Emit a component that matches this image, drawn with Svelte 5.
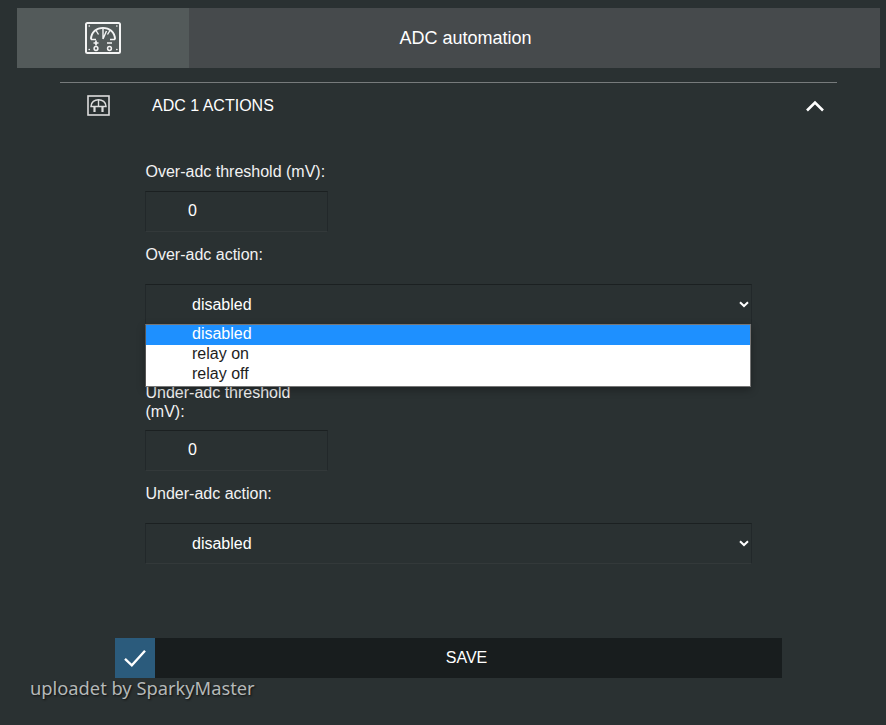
<script lang="ts">
  const menuOptions = ['disabled', 'relay on', 'relay off'];
</script>

{#snippet gaugeLarge()}
  <svg class="gauge-large" viewBox="0 0 36 32" fill="none" stroke="currentColor" aria-hidden="true">
    <rect x="1" y="1" width="34" height="30" rx="1.5" stroke-width="2" />
    <path d="M6 17.5 C6 2 30 2 30 17.5" stroke-width="1.9" />
    <path d="M6 17.5h5M25 17.5h5" stroke-width="1.6" />
    <path d="M18 6v11M11 8.5l2.5 4M25 8.5l-2.5 4M18 17l3.5-8" stroke-width="1.4" />
    <path d="M8.5 21h5M11 18.5v5M22 21h5" stroke-width="1.7" />
    <circle cx="11" cy="26.5" r="1.9" stroke-width="1.5" />
    <circle cx="24.5" cy="26.5" r="1.9" stroke-width="1.5" />
    <path d="M4.2 4h.1M31.8 4h.1M4.2 27.5h.1M31.8 27.5h.1" stroke-width="1.6" stroke-linecap="round" />
  </svg>
{/snippet}

{#snippet gaugeSmall()}
  <svg class="gauge-small" viewBox="0 0 23 21" fill="none" stroke="currentColor" aria-hidden="true">
    <rect x="1" y="1" width="21" height="19" stroke-width="1.6" />
    <path d="M4 11.5 C4 2.5 19 2.5 19 11.5 Z" stroke-width="1.5" />
    <path d="M11.5 4.5v7" stroke-width="1.4" />
    <path d="M7.5 11.5v5.5M15.5 11.5v5.5" stroke-width="2.2" />
  </svg>
{/snippet}

{#snippet chevron()}
  <svg class="select-arrow" viewBox="0 0 10 7" fill="none" stroke="currentColor" stroke-width="2" aria-hidden="true">
    <polyline points="1 1.2 5 5 9 1.2" />
  </svg>
{/snippet}

<div class="page">
  <header class="top-bar">
    <div class="top-icon">{@render gaugeLarge()}</div>
    <h1 class="top-title">ADC automation</h1>
  </header>

  <section class="panel">
    <div class="panel-head">
      <span class="panel-icon">{@render gaugeSmall()}</span>
      <h2 class="panel-title">ADC 1 ACTIONS</h2>
      <svg class="collapse" viewBox="0 0 20 12" fill="none" stroke="currentColor" stroke-width="2.6" aria-hidden="true">
        <polyline points="2 10.5 10 2.5 18 10.5" />
      </svg>
    </div>

    <form class="form">
      <label class="label first" for="over-threshold">Over-adc threshold (mV):</label>
      <input id="over-threshold" class="field number" type="text" value="0" />

      <label class="label action" for="over-action">Over-adc action:</label>
      <div class="select-wrap">
        <select id="over-action" class="field select">
          <option>disabled</option>
        </select>
        {@render chevron()}
        <ul class="menu">
          {#each menuOptions as option, i}
            <li class="menu-item" class:selected={i === 0}>{option}</li>
          {/each}
        </ul>
      </div>

      <label class="label wrapped" for="under-threshold">Under-adc threshold (mV):</label>
      <input id="under-threshold" class="field number" type="text" value="0" />

      <label class="label action" for="under-action">Under-adc action:</label>
      <div class="select-wrap">
        <select id="under-action" class="field select">
          <option>disabled</option>
        </select>
        {@render chevron()}
      </div>
    </form>
  </section>

  <button class="save" type="button">
    <span class="save-icon">
      <svg viewBox="0 0 26 22" fill="none" stroke="currentColor" stroke-width="2.6" aria-hidden="true">
        <polyline points="2 12 9.5 19 24 3" />
      </svg>
    </span>
    <span class="save-text">SAVE</span>
  </button>

  <div class="credit">uploadet by SparkyMaster</div>
</div>

<style>
  :global(body) {
    background: #2a3132;
  }

  .page {
    height: 725px;
    box-sizing: border-box;
    padding-top: 8px;
    overflow: hidden;
    font-family: "Liberation Sans", Arial, sans-serif;
    color: #fff;
  }

  .top-bar {
    display: flex;
    height: 60px;
    margin: 0 6px 0 17px;
    background: #464a4c;
  }

  .top-icon {
    display: flex;
    align-items: center;
    justify-content: center;
    width: 172px;
    background: #535a5a;
    color: #f4f4f4;
  }

  .gauge-large {
    width: 36px;
    height: 32px;
  }

  .top-title {
    flex: 1;
    margin: 0;
    font-size: 18px;
    font-weight: 400;
    line-height: 60px;
    text-align: center;
    padding-right: 138px;
  }

  .panel {
    margin: 14px 49px 0 60px;
    border-top: 1px solid #777b7c;
  }

  .panel-head {
    display: flex;
    align-items: center;
    height: 45px;
    color: #fff;
  }

  .panel-icon {
    display: flex;
    width: 92px;
    padding-left: 27px;
    box-sizing: border-box;
    color: #dcdcdc;
  }

  .gauge-small {
    width: 23px;
    height: 21px;
  }

  .panel-title {
    flex: 1;
    margin: 0;
    font-size: 16px;
    font-weight: 400;
  }

  .collapse {
    width: 20px;
    height: 12px;
    margin-right: 12px;
  }

  .form {
    display: flex;
    flex-direction: column;
    align-items: flex-start;
    padding-left: 85px;
  }

  .label {
    display: block;
    padding-left: 0.5px;
    font-size: 16px;
    line-height: 19px;
    color: #f2f2f2;
  }

  .first {
    margin-top: 34px;
    margin-bottom: 10px;
  }

  .action {
    margin-top: 13px;
    margin-bottom: 20px;
  }

  .wrapped {
    width: 160px;
    margin-top: 58px;
    margin-bottom: 9px;
  }

  .field {
    box-sizing: border-box;
    height: 41px;
    margin: 0;
    border: 1px solid #22282a;
    border-top-color: #1b2021;
    border-bottom-color: #33393a;
    border-radius: 0;
    outline: none;
    background: #2a3132;
    color: #fff;
    font-family: inherit;
    font-size: 16px;
  }

  .number {
    width: 183px;
    padding: 0 0 2px 42px;
  }

  .select-wrap {
    position: relative;
    display: flex;
  }

  .select {
    width: 607px;
    padding-left: 46px;
    appearance: none;
    -webkit-appearance: none;
  }

  .select-arrow {
    position: absolute;
    right: 3px;
    top: 17px;
    width: 10px;
    height: 7px;
    color: #fff;
    pointer-events: none;
  }

  .menu {
    position: absolute;
    left: 0;
    top: 40px;
    width: 606px;
    box-sizing: border-box;
    margin: 0;
    padding: 0 0 1px;
    list-style: none;
    background: #fff;
    border: 1px solid #767676;
    border-left-color: #555;
    box-shadow: 0 3px 8px rgba(0, 0, 0, 0.3);
  }

  .menu-item {
    height: 20px;
    padding-left: 46px;
    font-size: 16px;
    line-height: 18px;
    color: #1d1d1d;
  }

  .menu-item.selected {
    background: #1e90ff;
    color: #fff;
  }

  .save {
    display: flex;
    align-items: stretch;
    width: 667px;
    height: 40px;
    margin: 74px 0 0 115px;
    padding: 0;
    border: none;
    background: #181d1e;
    color: #fff;
    font-family: inherit;
    font-size: 16px;
  }

  .save-icon {
    display: flex;
    align-items: center;
    justify-content: center;
    width: 40px;
    background: #2b5b7c;
  }

  .save-icon svg {
    width: 24px;
    height: 20px;
  }

  .save-text {
    flex: 1;
    line-height: 40px;
    text-align: center;
    padding-right: 4px;
  }

  .credit {
    margin: -1px 0 0 30px;
    font-family: "Noto Sans", sans-serif;
    font-size: 18.3px;
    line-height: 21px;
    color: #b4b8b8;
    text-shadow: 1px 1px 2px #111;
  }
</style>
